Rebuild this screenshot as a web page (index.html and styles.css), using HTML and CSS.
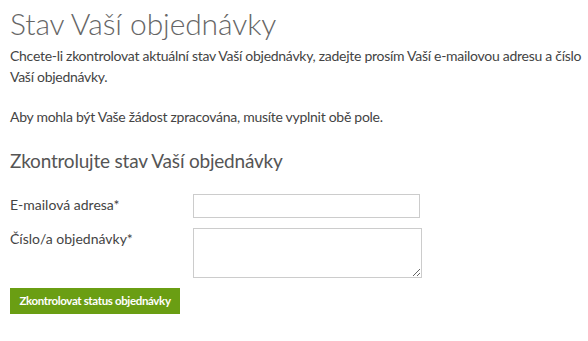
FILE: index.html
```html
<!DOCTYPE html>
<html lang="cs">
<head>
<meta charset="utf-8">
<title>Stav Vaší objednávky</title>
<link rel="stylesheet" href="styles.css">
</head>
<body>
<main class="page">
  <h1 class="title">Stav Vaší objednávky</h1>
  <p class="text">Chcete-li zkontrolovat aktuální stav Vaší objednávky, zadejte prosím Vaší e-mailovou adresu a číslo Vaší objednávky.</p>
  <p class="text">Aby mohla být Vaše žádost zpracována, musíte vyplnit obě pole.</p>
  <h2 class="subtitle">Zkontrolujte stav Vaší objednávky</h2>
  <form class="form">
    <div class="row">
      <label class="label" for="email">E-mailová adresa*</label>
      <input class="input" id="email" type="text">
    </div>
    <div class="row">
      <label class="label" for="order">Číslo/a objednávky*</label>
      <textarea class="area" id="order"></textarea>
    </div>
    <button class="button" type="button">Zkontrolovat status objednávky</button>
  </form>
</main>
</body>
</html>
```
FILE: styles.css
```css
html, body {
  margin: 0;
  padding: 0;
  background: #fff;
}
.page {
  padding: 0 6px 0 10px;
  font-family: Lato, "Open Sans", sans-serif;
  color: #444;
  font-size: 14px;
}
.title {
  margin: 0;
  padding-top: 5px;
  font-size: 30px;
  font-weight: 300;
  line-height: 36px;
  color: #666;
  letter-spacing: -0.1px;
}
.text {
  margin: 5px 0 20px;
  line-height: 20.6px;
  letter-spacing: -0.28px;
}
.subtitle {
  margin: 0;
  font-size: 19px;
  font-weight: 400;
  line-height: 26px;
  color: #555;
  letter-spacing: -0.2px;
}
.form {
  margin-top: 20px;
}
.row {
  display: flex;
  align-items: flex-start;
  margin-bottom: 10px;
}
.label {
  width: 183px;
  flex: none;
  line-height: 22px;
}
.input {
  box-sizing: border-box;
  width: 227px;
  height: 24px;
  border: 1px solid #ccc;
  margin: 0;
  padding: 2px 4px;
}
.area {
  box-sizing: border-box;
  width: 229px;
  height: 50px;
  border: 1px solid #ccc;
  margin: 0;
  padding: 2px 4px;
}
.button {
  display: block;
  box-sizing: border-box;
  margin-top: 1px;
  width: 170px;
  height: 26px;
  border: 0;
  padding: 0;
  background: #6a9e13;
  color: #fff;
  font-family: Lato, sans-serif;
  font-size: 11.5px;
  font-weight: 700;
  letter-spacing: -0.35px;
  white-space: nowrap;
}
```
